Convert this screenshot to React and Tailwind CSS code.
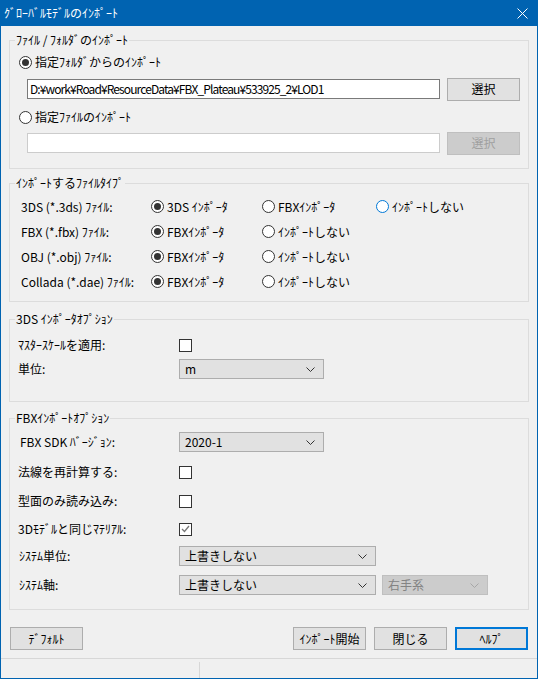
import React from "react";

const Radio = ({ checked, focus }) => (
  <span
    className={
      "flex h-[13px] w-[13px] shrink-0 items-center justify-center rounded-full border bg-white " +
      (focus ? "border-[#0078d7]" : "border-[#333333]")
    }
  >
    {checked && <span className="h-[7px] w-[7px] rounded-full bg-[#333333]" />}
  </span>
);

const RadioLabel = ({ checked, focus, children, className }) => (
  <div className={"flex items-center gap-[3px] " + (className || "")}>
    <Radio checked={checked} focus={focus} />
    <span>{children}</span>
  </div>
);

const Check = ({ checked }) => (
  <span className="flex h-[13px] w-[13px] items-center justify-center border border-[#333333] bg-white">
    {checked && (
      <svg width="9" height="8" viewBox="0 0 9 8">
        <path d="M1 4 L3.5 6.5 L8 1" fill="none" stroke="#777777" strokeWidth="1.3" />
      </svg>
    )}
  </span>
);

const Select = ({ value, w, disabled }) => (
  <div
    className={
      "flex h-[20px] items-center justify-between border pl-[5px] pr-[8px] " +
      w +
      (disabled
        ? " border-[#bfbfbf] bg-[#cccccc] text-[#838383]"
        : " border-[#adadad] bg-[#e1e1e1]")
    }
  >
    <span>{value}</span>
    <svg width="9" height="5" viewBox="0 0 9 5">
      <path d="M0.5 0.5 L4.5 4.5 L8.5 0.5" fill="none" stroke={disabled ? "#a6a6a6" : "#333333"} strokeWidth="1" />
    </svg>
  </div>
);

const Btn = ({ children, disabled, primary, className }) => (
  <div
    className={
      "flex h-[23px] w-[73px] items-center justify-center " +
      (primary
        ? "border-2 border-[#0078d7] bg-[#e1e1e1]"
        : disabled
        ? "border border-[#bfbfbf] bg-[#cccccc] text-[#a0a0a0]"
        : "border border-[#adadad] bg-[#e1e1e1]") +
      " " +
      (className || "")
    }
  >
    {children}
  </div>
);

const Group = ({ title, className, children }) => (
  <fieldset className={"border border-[#dcdcdc] " + (className || "")}>
    <legend className="ml-[5px] px-[1px] leading-[14px]">{title}</legend>
    {children}
  </fieldset>
);

const types = [
  { label: "3DS (*.3ds) ﾌｧｲﾙ:", first: "3DS ｲﾝﾎﾟｰﾀ", second: "FBXｲﾝﾎﾟｰﾀ", third: true },
  { label: "FBX (*.fbx) ﾌｧｲﾙ:", first: "FBXｲﾝﾎﾟｰﾀ", second: "ｲﾝﾎﾟｰﾄしない" },
  { label: "OBJ (*.obj) ﾌｧｲﾙ:", first: "FBXｲﾝﾎﾟｰﾀ", second: "ｲﾝﾎﾟｰﾄしない" },
  { label: "Collada (*.dae) ﾌｧｲﾙ:", first: "FBXｲﾝﾎﾟｰﾀ", second: "ｲﾝﾎﾟｰﾄしない" },
];

export default function App() {
  return (
    <div
      className="flex h-[679px] w-[538px] flex-col text-[12px] leading-[14px] text-black"
      style={{ fontFamily: '"Noto Sans CJK JP", "Noto Sans", sans-serif' }}
    >
      {/* title bar */}
      <div className="flex h-[26px] shrink-0 items-center justify-between bg-[#0063b1] pl-[4px] pr-[10px] text-white">
        <span>ｸﾞﾛｰﾊﾞﾙﾓﾃﾞﾙのｲﾝﾎﾟｰﾄ</span>
        <svg width="11" height="11" viewBox="0 0 11 11">
          <path d="M0.5 0.5 L10.5 10.5 M10.5 0.5 L0.5 10.5" stroke="#ffffff" strokeWidth="1" />
        </svg>
      </div>

      <div className="flex flex-1 flex-col border-x border-b border-[#0063b1] bg-[#f0f0f0]">
        <div className="flex flex-col pl-[8px] pr-[8px]">
          {/* file / folder */}
          <Group title="ﾌｧｲﾙ / ﾌｫﾙﾀﾞのｲﾝﾎﾟｰﾄ" className="mt-[7px]">
            <div className="flex flex-col pb-[14px] pl-[9px]">
              <RadioLabel checked className="mt-[8px] h-[14px]">指定ﾌｫﾙﾀﾞからのｲﾝﾎﾟｰﾄ</RadioLabel>
              <div className="mt-[9px] flex h-[22px] items-center gap-[7px] pl-[8px]">
                <div className="flex h-[20px] w-[413px] items-center border border-[#7a7a7a] bg-white px-[2px] tracking-[-0.9px]">
                  D:¥work¥Road¥ResourceData¥FBX_Plateau¥533925_2¥LOD1
                </div>
                <Btn>選択</Btn>
              </div>
              <RadioLabel className="mt-[10px] h-[14px]">指定ﾌｧｲﾙのｲﾝﾎﾟｰﾄ</RadioLabel>
              <div className="mt-[8px] flex h-[22px] items-center gap-[7px] pl-[8px]">
                <div className="h-[20px] w-[413px] border border-[#cccccc] bg-white" />
                <Btn disabled>選択</Btn>
              </div>
            </div>
          </Group>

          {/* file types */}
          <Group title="ｲﾝﾎﾟｰﾄするﾌｧｲﾙﾀｲﾌﾟ" className="mt-[7px]">
            <div className="flex flex-col pb-[7px] pl-[11px] pt-[4px]">
              {types.map((t) => (
                <div key={t.label} className="flex h-[25px] items-center">
                  <span className="w-[130px]">{t.label}</span>
                  <RadioLabel checked className="w-[111px]">{t.first}</RadioLabel>
                  <RadioLabel className="w-[114px]">{t.second}</RadioLabel>
                  {t.third && <RadioLabel focus>ｲﾝﾎﾟｰﾄしない</RadioLabel>}
                </div>
              ))}
            </div>
          </Group>

          {/* 3DS options */}
          <Group title="3DS ｲﾝﾎﾟｰﾀｵﾌﾟｼｮﾝ" className="mt-[10px]">
            <div className="flex flex-col pb-[22px] pl-[8px]">
              <div className="mt-[9px] flex h-[20px] items-center">
                <span className="w-[161px]">ﾏｽﾀｰｽｹｰﾙを適用:</span>
                <Check />
              </div>
              <div className="mt-[4px] flex h-[20px] items-center">
                <span className="w-[161px]">単位:</span>
                <Select value="m" w="w-[145px]" />
              </div>
            </div>
          </Group>

          {/* FBX options */}
          <Group title="FBXｲﾝﾎﾟｰﾄｵﾌﾟｼｮﾝ" className="mt-[9px]">
            <div className="flex flex-col pb-[14px] pl-[8px]">
              <div className="mt-[7px] flex h-[20px] items-center">
                <span className="w-[161px] pl-[2px]">FBX SDK ﾊﾞｰｼﾞｮﾝ:</span>
                <Select value="2020-1" w="w-[145px]" />
              </div>
              <div className="mt-[10px] flex h-[20px] items-center">
                <span className="w-[161px]">法線を再計算する:</span>
                <Check />
              </div>
              <div className="mt-[9px] flex h-[20px] items-center">
                <span className="w-[161px]">型面のみ読み込み:</span>
                <Check />
              </div>
              <div className="mt-[8px] flex h-[20px] items-center">
                <span className="w-[161px]">3Dﾓﾃﾞﾙと同じﾏﾃﾘｱﾙ:</span>
                <Check checked />
              </div>
              <div className="mt-[7px] flex h-[20px] items-center">
                <span className="w-[161px] pl-[1px]">ｼｽﾃﾑ単位:</span>
                <Select value="上書きしない" w="w-[197px]" />
              </div>
              <div className="mt-[9px] flex h-[20px] items-center gap-[6px]">
                <span className="w-[155px] pl-[1px]">ｼｽﾃﾑ軸:</span>
                <Select value="上書きしない" w="w-[197px]" />
                <Select value="右手系" w="w-[106px]" disabled />
              </div>
            </div>
          </Group>

          {/* buttons */}
          <div className="mt-[17px] flex items-center pl-[1px] pr-[1px]">
            <Btn>ﾃﾞﾌｫﾙﾄ</Btn>
            <div className="ml-auto flex gap-[8px]">
              <Btn>ｲﾝﾎﾟｰﾄ開始</Btn>
              <Btn>閉じる</Btn>
              <Btn primary>ﾍﾙﾌﾟ</Btn>
            </div>
          </div>
        </div>

        {/* status bar */}
        <div className="mt-auto flex h-[20px] border-t border-[#d7d7d7]">
          <div className="mt-[3px] w-[199px] border-r border-[#d7d7d7]" />
        </div>
      </div>
    </div>
  );
}
